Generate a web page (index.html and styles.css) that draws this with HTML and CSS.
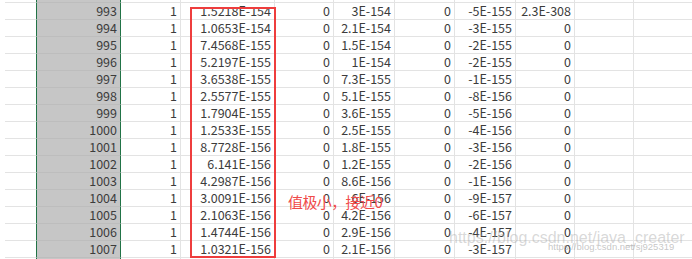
FILE: index.html
```html
<!DOCTYPE html>
<html>
<head>
<meta charset="utf-8">
<link rel="stylesheet" href="styles.css">
</head>
<body>
<div class="view">
  <div class="sheet" id="sheet"></div>
  <div class="redbox"></div>
  <div class="note">值极小，接近0</div>
  <div class="wm-big">https://blog.csdn.net/java_creater</div>
  <div class="wm-small">https://blog.csdn.net/sj925319</div>
</div>
<script src="app.js"></script>
</body>
</html>
```

FILE: app.js
```js
const rows = [
  [993, "1.5218E-154", "3E-154", "-5E-155", "2.3E-308"],
  [994, "1.0653E-154", "2.1E-154", "-3E-155", "0"],
  [995, "7.4568E-155", "1.5E-154", "-2E-155", "0"],
  [996, "5.2197E-155", "1E-154", "-2E-155", "0"],
  [997, "3.6538E-155", "7.3E-155", "-1E-155", "0"],
  [998, "2.5577E-155", "5.1E-155", "-8E-156", "0"],
  [999, "1.7904E-155", "3.6E-155", "-5E-156", "0"],
  [1000, "1.2533E-155", "2.5E-155", "-4E-156", "0"],
  [1001, "8.7728E-156", "1.8E-155", "-3E-156", "0"],
  [1002, "6.141E-156", "1.2E-155", "-2E-156", "0"],
  [1003, "4.2987E-156", "8.6E-156", "-1E-156", "0"],
  [1004, "3.0091E-156", "6E-156", "-9E-157", "0"],
  [1005, "2.1063E-156", "4.2E-156", "-6E-157", "0"],
  [1006, "1.4744E-156", "2.9E-156", "-4E-157", "0"],
  [1007, "1.0321E-156", "2.1E-156", "-3E-157", "0"]
];
const sheet = document.getElementById("sheet");
function addRow(cells) {
  cells.forEach((t, i) => {
    const d = document.createElement("div");
    d.className = "cell" + (i === 0 ? " first" : "") + (i === 1 ? " sel" : "");
    d.textContent = t;
    sheet.appendChild(d);
  });
}
const blank = ["", "", "", "", "", "", "", "", "", "", ""];
addRow(blank);
rows.forEach(r => {
  addRow(["", String(r[0]), "1", r[1], "0", r[2], "0", r[3], r[4], "", ""]);
});
addRow(blank);
```

FILE: styles.css
```css
html, body {
  margin: 0;
  padding: 0;
  background: #ffffff;
}
.view {
  position: relative;
  width: 692px;
  height: 259px;
  overflow: hidden;
  background: #ffffff;
}
.sheet {
  display: grid;
  grid-template-columns: 32px 84px 60px 94px 59px 61px 60px 61px 59px 59px 60px;
  grid-template-rows: 3px repeat(16, 17px);
  padding-left: 5px;
  font-family: "Noto Sans CJK SC", "Liberation Sans", sans-serif;
  font-size: 12.5px;
  color: #3c3c3c;
}
.cell {
  box-sizing: border-box;
  border-right: 1px solid #e3e3e3;
  border-bottom: 1px solid #e3e3e3;
  text-align: right;
  padding-right: 3px;
  line-height: 16px;
  white-space: nowrap;
  min-height: 0;
}
.cell.first {
  border-right: 1px solid #217346;
}
.cell.sel {
  background: #c6c6c6;
  border-right: 1px solid #217346;
  border-bottom-color: #bdbdbd;
}
.redbox {
  position: absolute;
  left: 190px;
  top: 7px;
  width: 86px;
  height: 251px;
  box-sizing: border-box;
  border: 2px solid #ee3d3d;
}
.note {
  position: absolute;
  left: 288px;
  top: 192px;
  font-family: "Noto Sans CJK SC", sans-serif;
  font-size: 15px;
  letter-spacing: -0.6px;
  color: #f04a4a;
  line-height: 20px;
}
.wm-big {
  position: absolute;
  left: 449px;
  top: 228px;
  font-family: "Liberation Sans", sans-serif;
  font-size: 16px;
  line-height: 20px;
  color: rgba(170, 170, 170, 0.45);
  white-space: nowrap;
}
.wm-small {
  position: absolute;
  left: 548px;
  top: 241px;
  font-family: "Liberation Sans", sans-serif;
  font-size: 9.5px;
  line-height: 12px;
  color: rgba(160, 160, 160, 0.6);
  white-space: nowrap;
}
```
